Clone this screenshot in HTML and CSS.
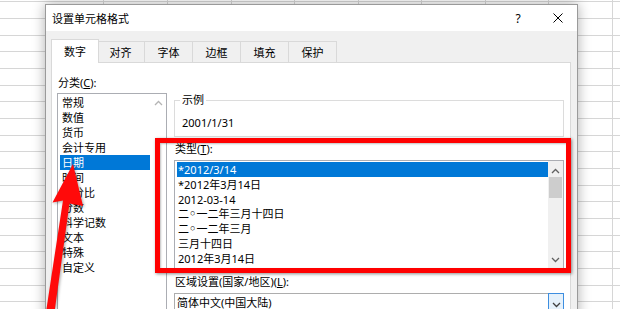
FILE: index.html
```html
<!DOCTYPE html>
<html lang="zh-CN">
<head>
<meta charset="utf-8">
<title>设置单元格格式</title>
<link rel="stylesheet" href="styles.css">
</head>
<body>
<div class="sheet-cols"></div>
<div class="dialog">
  <div class="titlebar">
    <span class="title">设置单元格格式</span>
    <span class="help">?</span>
    <svg class="close" width="10" height="10" viewBox="0 0 10 10"><path d="M0.5 0.5L9.5 9.5M9.5 0.5L0.5 9.5" stroke="#000" stroke-width="1" fill="none"/></svg>
  </div>
  <div class="dlg-body">
    <div class="tabs">
      <div class="tab active">数字</div>
      <div class="tab first">对齐</div>
      <div class="tab">字体</div>
      <div class="tab">边框</div>
      <div class="tab">填充</div>
      <div class="tab">保护</div>
    </div>
    <div class="panel">
      <div class="col-left">
        <div class="label">分类(<u>C</u>):</div>
        <div class="listbox cat">
          <div class="items">
            <div class="item">常规</div>
            <div class="item">数值</div>
            <div class="item">货币</div>
            <div class="item">会计专用</div>
            <div class="item sel">日期</div>
            <div class="item">时间</div>
            <div class="item">百分比</div>
            <div class="item">分数</div>
            <div class="item">科学记数</div>
            <div class="item">文本</div>
            <div class="item">特殊</div>
            <div class="item">自定义</div>
          </div>
          <div class="vscroll plain">
            <svg class="chev" width="9" height="6" viewBox="0 0 9 6"><path d="M1 5L4.5 1.5L8 5" stroke="#b4b4b4" stroke-width="1.3" fill="none"/></svg>
          </div>
        </div>
      </div>
      <div class="col-right">
        <fieldset class="sample">
          <legend>示例</legend>
          <div class="sample-text">2001/1/31</div>
        </fieldset>
        <div class="label">类型(<u>T</u>):</div>
        <div class="listbox type">
          <div class="items">
            <div class="item sel">*2012/3/14</div>
            <div class="item">*2012年3月14日</div>
            <div class="item">2012-03-14</div>
            <div class="item">二<span class="ling">○</span>一二年三月十四日</div>
            <div class="item">二<span class="ling">○</span>一二年三月</div>
            <div class="item">三月十四日</div>
            <div class="item">2012年3月14日</div>
          </div>
          <div class="vscroll">
            <svg class="chev" width="9" height="6" viewBox="0 0 9 6"><path d="M1 5L4.5 1.5L8 5" stroke="#606060" stroke-width="1.3" fill="none"/></svg>
            <div class="thumb"></div>
            <div class="track"></div>
            <svg class="chev" width="9" height="6" viewBox="0 0 9 6"><path d="M1 1L4.5 4.5L8 1" stroke="#606060" stroke-width="1.3" fill="none"/></svg>
          </div>
        </div>
        <div class="label region">区域设置(国家/地区)(<u>L</u>):</div>
        <div class="combo">
          <span class="combo-text">简体中文(中国大陆)</span>
          <span class="drop">
            <svg width="9" height="6" viewBox="0 0 9 6"><path d="M1 1L4.5 4.5L8 1" stroke="#404040" stroke-width="1.3" fill="none"/></svg>
          </span>
        </div>
      </div>
    </div>
  </div>
</div>
<div class="highlight"></div>
<svg class="arrow" width="620" height="309" viewBox="0 0 620 309">
  <polygon points="73,164 83,206 69.5,203.5 54.5,312 46,312 63,200.5 52.5,202.5" fill="#ff0a0a"/>
</svg>
</body>
</html>
```
FILE: styles.css
```css
* { box-sizing: border-box; }
html, body { margin: 0; padding: 0; }
body {
  width: 620px;
  height: 309px;
  overflow: hidden;
  position: relative;
  font-family: "Noto Sans", "Noto Sans CJK SC", sans-serif;
  font-size: 11px;
  line-height: 15px;
  color: #000;
  background-color: #fff;
  background-image: repeating-linear-gradient(to bottom, transparent 0 1.4px, #d6d6d6 1.4px 2.4px, transparent 2.4px 16.667px);
}
u { text-decoration: underline; text-underline-offset: 1px; }
.ling {
  font-family: "Liberation Sans", sans-serif;
  font-size: 9px;
  padding: 0 1px;
  position: relative;
  top: -2px;
}

.sheet-cols {
  position: absolute;
  left: 100px; top: 0; right: 0; bottom: 0;
  background-image: repeating-linear-gradient(to right, transparent 0 3.5px, #d6d6d6 3.5px 4.5px, transparent 4.5px 63.5px);
}

.dialog {
  position: absolute;
  left: 45px;
  top: 4px;
  width: 533px;
  height: 330px;
  background: #f0f0f0;
  border: 1px solid #9a9a9a;
  box-shadow: 0 0 12px rgba(0,0,0,0.32);
  display: flex;
  flex-direction: column;
}

.titlebar {
  height: 26px;
  background: #fff;
  display: flex;
  align-items: center;
  padding: 0 14px 0 6px;
}
.title { flex: 1; font-size: 11px; }
.help { width: 12px; text-align: center; font-size: 12px; margin-right: 29px; }
.close { display: block; }

.dlg-body {
  flex: 1;
  display: flex;
  flex-direction: column;
  padding: 8px 6px 0 5px;
}

.tabs {
  display: flex;
  align-items: flex-end;
  height: 23px;
  position: relative;
  z-index: 2;
}
.tab {
  width: 48px;
  height: 21px;
  border: 1px solid #d9d9d9;
  border-bottom: none;
  border-left: none;
  background: #f0f0f0;
  display: flex;
  align-items: center;
  justify-content: center;
  padding-top: 1px;
}
.tab.active {
  height: 24px;
  margin-bottom: -1px;
  background: #fff;
  border-left: 1px solid #d9d9d9;
  position: relative;
  z-index: 3;
  padding-top: 0;
}
.tab.first { margin-left: -2px; }

.panel {
  flex: 1;
  background: #fff;
  border: 1px solid #d9d9d9;
  display: flex;
  gap: 7px;
  padding: 12px 6px 0 5px;
}

.col-left { width: 110px; display: flex; flex-direction: column; }
.label { padding-left: 1px; }

.listbox {
  border: 1px solid #abadb3;
  display: flex;
  background: #fff;
  overflow: hidden;
}
.listbox .items { flex: 1; padding: 1px 0 0 2px; }
.listbox .item { height: 15px; padding-left: 2px; white-space: nowrap; }
.listbox .item.sel { background: #0078d7; color: #fff; }

.cat { margin-top: 3px; height: 220px; }
.cat .items { padding-top: 1px; }
.vscroll {
  width: 16px;
  display: flex;
  flex-direction: column;
  align-items: center;
}
.vscroll.plain { padding-top: 6px; }
.vscroll .chev { display: block; }

.col-right { flex: 1; display: flex; flex-direction: column; }

.sample {
  margin: 18px 0 0 0;
  padding: 8px 6px 6px 6px;
  border: 1px solid #dcdcdc;
  min-width: 0;
}
.sample legend {
  padding: 0 2px;
  margin-left: -1px;
  line-height: 14px;
}
.sample-text { padding-left: 1px; }

.col-right .label { margin-top: 4px; }
.col-right .label.region { margin-top: 5px; }

.type { margin-top: 4px; height: 109px; }
.type .items { padding: 1px 0 0 2px; }
.type .item { height: 14.8px; padding-left: 1px; }
.type .vscroll {
  width: 15px;
  background: #f0f0f0;
  padding-top: 7px;
}
.type .thumb {
  width: 13px;
  height: 21px;
  background: #cdcdcd;
  margin-top: 3px;
}
.type .track { flex: 1; }
.type .vscroll .chev:last-child { margin-bottom: 5px; }

.combo {
  margin-top: 4px;
  height: 22px;
  border: 1px solid #adadad;
  display: flex;
  align-items: stretch;
}
.combo-text { flex: 1; padding: 1px 0 0 2px; }
.drop {
  width: 16px;
  background: #e5f1fb;
  border: 1px solid #3d8ee0;
  margin: -1px -1px 0 0;
  display: flex;
  align-items: center;
  justify-content: center;
  padding-top: 2px;
}
.drop svg { display: block; }

.highlight {
  position: absolute;
  left: 155px;
  top: 138px;
  width: 416px;
  height: 135px;
  border: 5px solid #ff0000;
  box-shadow: 1px 1px 3px rgba(0,0,0,0.45), inset 1px 1px 2px rgba(0,0,0,0.25);
}

.arrow {
  position: absolute;
  left: 0;
  top: 0;
  pointer-events: none;
  filter: drop-shadow(1px 1px 1.5px rgba(0,0,0,0.35));
}
```
